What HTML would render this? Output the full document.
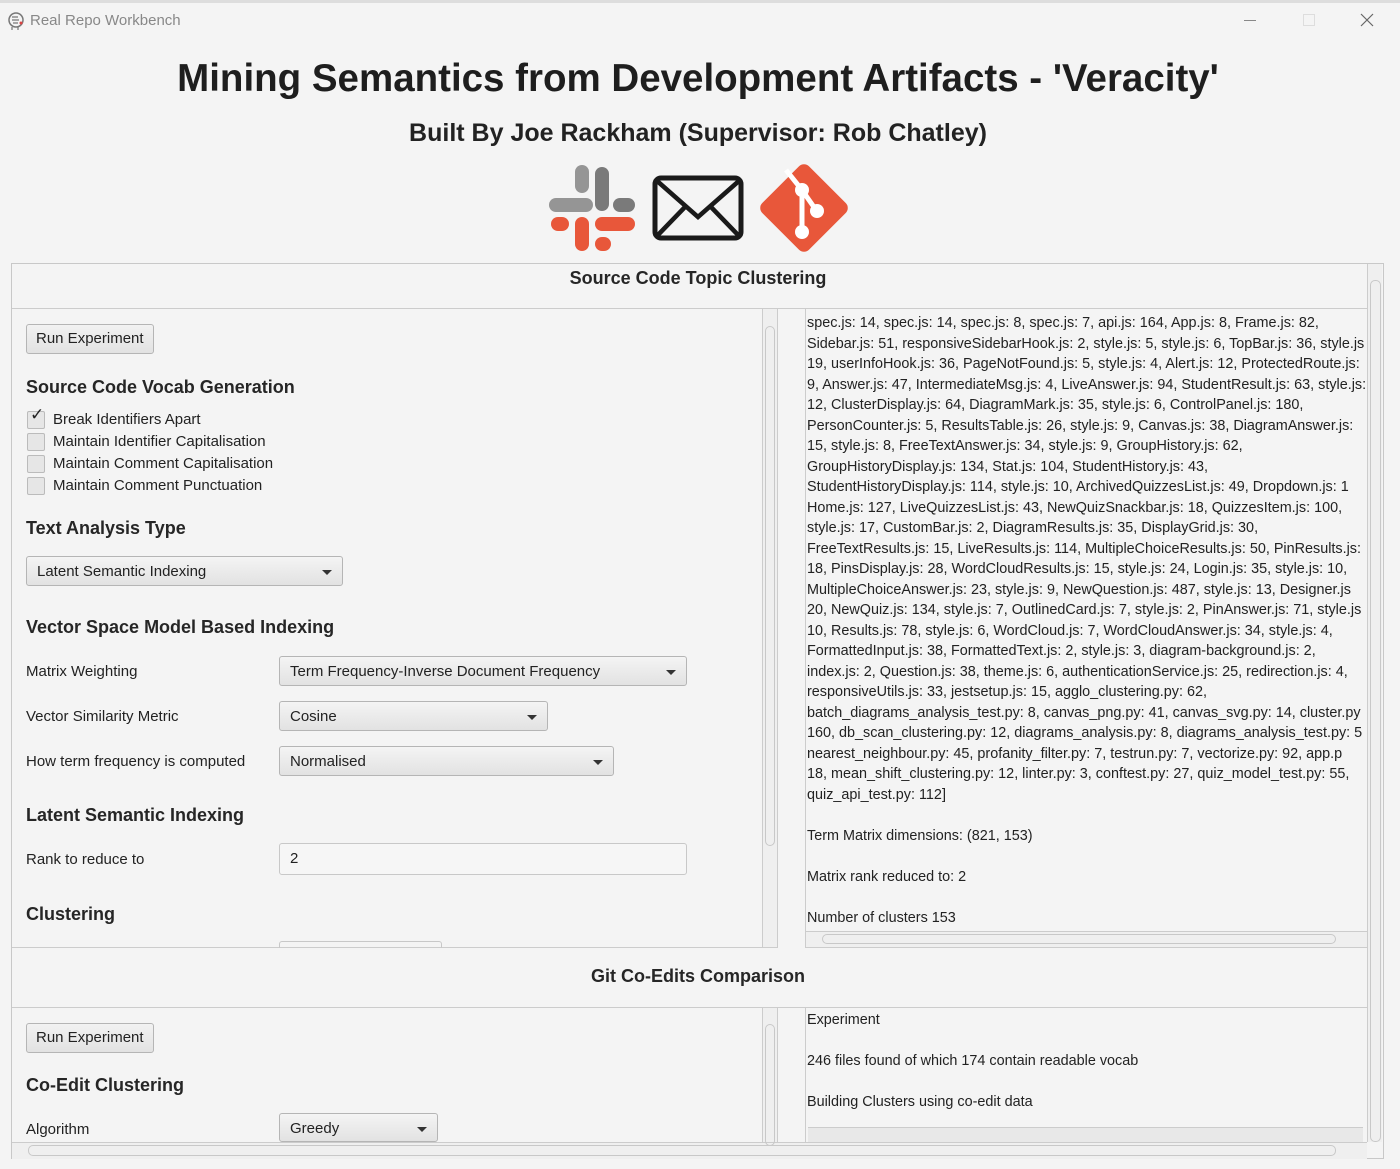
<!DOCTYPE html>
<html><head><meta charset="utf-8"><style>
body{margin:0;width:1400px;height:1169px;background:#f4f4f4;font-family:"Liberation Sans",sans-serif;color:#222;position:relative;overflow:hidden}
.a{position:absolute}
.t{font-size:15px;white-space:nowrap}
.h{font-weight:bold;font-size:18px;color:#262626}
.btn{position:absolute;border:1px solid #b5b5b5;border-radius:3px;background:linear-gradient(#f2f2f2,#e2e2e2);font-size:15px;padding:0 9px;line-height:28px;height:28px}
.cb{position:absolute;width:16px;height:16px;border:1px solid #bbb;border-radius:2px;background:#e6e6e6}
.dd{position:absolute;border:1px solid #b5b5b5;border-radius:3px;background:linear-gradient(#f4f4f4,#e2e2e2);height:30px;font-size:15px;line-height:30px;padding-left:10px;box-sizing:border-box}
.dd:after{content:"";position:absolute;right:10px;top:13px;border-left:5px solid transparent;border-right:5px solid transparent;border-top:5px solid #333}
.vs{position:absolute;width:14px;border-left:1px solid #ccc;background:#efefef}
.out{font-size:14.4px;line-height:20.5px;white-space:nowrap}
</style></head><body>
<div class="a" style="left:0;top:0;width:1400px;height:3px;background:#ddd"></div>
<svg class="a" style="left:6px;top:11px" width="20" height="20" viewBox="0 0 20 20"><circle cx="10" cy="9" r="7" fill="none" stroke="#777" stroke-width="1.5"/><path d="M6 16v3M12 16v3M6 6h6M6 9h7M7 12h5" stroke="#777" stroke-width="1.2"/><circle cx="15" cy="12" r="1.5" fill="#d44"/></svg>
<div class="a t" style="left:30px;top:12px;color:#888;font-size:15px">Real Repo Workbench</div>
<div class="a" style="left:1244px;top:20px;width:12px;height:1px;background:#888"></div>
<div class="a" style="left:1303px;top:14px;width:10px;height:10px;border:1px solid #ddd"></div>
<svg class="a" style="left:1360px;top:13px" width="14" height="14"><path d="M1 1L13 13M13 1L1 13" stroke="#666" stroke-width="1.2"/></svg>

<div class="a" style="left:0;top:57px;width:1396px;text-align:center;font-weight:bold;font-size:38.5px;color:#1e1e1e">Mining Semantics from Development Artifacts - 'Veracity'</div>
<div class="a" style="left:0;top:119px;width:1396px;text-align:center;font-weight:bold;font-size:25px;color:#222">Built By Joe Rackham (Supervisor: Rob Chatley)</div>

<svg class="a" style="left:548px;top:164px" width="88" height="88" viewBox="0 0 88 88">
<g stroke-linecap="round">
<line x1="34" y1="8" x2="34" y2="22" stroke="#959595" stroke-width="14"/>
<line x1="8" y1="41" x2="38" y2="41" stroke="#959595" stroke-width="14"/>
<line x1="54" y1="10" x2="54" y2="40" stroke="#7a7a7a" stroke-width="14"/>
<line x1="80" y1="41" x2="72" y2="41" stroke="#7a7a7a" stroke-width="14"/>
<line x1="54" y1="60" x2="80" y2="60" stroke="#e8573a" stroke-width="14"/>
<line x1="54" y1="80" x2="56" y2="80" stroke="#e8573a" stroke-width="14"/>
<line x1="34" y1="60" x2="34" y2="80" stroke="#e8573a" stroke-width="14"/>
<line x1="10" y1="60" x2="14" y2="60" stroke="#e8573a" stroke-width="14"/>
</g></svg>
<svg class="a" style="left:652px;top:175px" width="92" height="66" viewBox="0 0 92 66"><rect x="3" y="3" width="86" height="60" rx="6" fill="none" stroke="#1a1a1a" stroke-width="5"/><path d="M4 5L46 42L88 5M4 62L33 32M88 62L59 32" fill="none" stroke="#1a1a1a" stroke-width="4.5"/></svg>
<svg class="a" style="left:756px;top:160px" width="96" height="96" viewBox="0 0 96 96"><rect x="15" y="15" width="66" height="66" rx="7" transform="rotate(45 48 48)" fill="#e8573a"/><path d="M30 10L46 30L46 72M46 30L60 50" stroke="#fff" stroke-width="5" fill="none"/><circle cx="46" cy="30" r="7" fill="#fff"/><circle cx="61" cy="51" r="7" fill="#fff"/><circle cx="46" cy="72" r="7" fill="#fff"/></svg>

<div class="a" style="left:11px;top:263px;width:1373px;height:896px;border:1px solid #c8c8c8;box-sizing:border-box"></div>
<div class="vs" style="left:1367px;top:264px;height:878px"></div>
<div class="a" style="left:1370px;top:280px;width:9px;height:860px;border:1px solid #c8c8c8;border-radius:5px"></div>
<div class="a" style="left:12px;top:1142px;width:1355px;height:16px;background:#efefef;border-top:1px solid #ccc"></div>
<div class="a" style="left:28px;top:1145px;width:1306px;height:9px;border:1px solid #c8c8c8;border-radius:5px"></div>

<div class="a h" style="left:12px;top:268px;width:1372px;text-align:center">Source Code Topic Clustering</div>
<div class="a" style="left:12px;top:308px;width:1355px;height:1px;background:#ccc"></div>

<div class="a" style="left:12px;top:309px;width:766px;height:639px;border-right:1px solid #ccc;border-bottom:1px solid #ccc;box-sizing:border-box"></div>
<div class="vs" style="left:762px;top:309px;height:638px"></div>
<div class="a" style="left:765px;top:326px;width:8px;height:518px;border:1px solid #c8c8c8;border-radius:5px"></div>
<div class="btn" style="left:26px;top:324px">Run Experiment</div>
<div class="a h" style="left:26px;top:377px">Source Code Vocab Generation</div>
<div class="cb" style="left:27px;top:411px"></div><div class="a" style="left:30px;top:405px;font-size:17px">✓</div>
<div class="a t" style="left:53px;top:411px">Break Identifiers Apart</div>
<div class="cb" style="left:27px;top:433px"></div><div class="a t" style="left:53px;top:433px">Maintain Identifier Capitalisation</div>
<div class="cb" style="left:27px;top:455px"></div><div class="a t" style="left:53px;top:455px">Maintain Comment Capitalisation</div>
<div class="cb" style="left:27px;top:477px"></div><div class="a t" style="left:53px;top:477px">Maintain Comment Punctuation</div>
<div class="a h" style="left:26px;top:518px">Text Analysis Type</div>
<div class="dd" style="left:26px;top:556px;width:317px">Latent Semantic Indexing</div>
<div class="a h" style="left:26px;top:617px">Vector Space Model Based Indexing</div>
<div class="a t" style="left:26px;top:663px">Matrix Weighting</div>
<div class="dd" style="left:279px;top:656px;width:408px">Term Frequency-Inverse Document Frequency</div>
<div class="a t" style="left:26px;top:708px">Vector Similarity Metric</div>
<div class="dd" style="left:279px;top:701px;width:269px">Cosine</div>
<div class="a t" style="left:26px;top:753px">How term frequency is computed</div>
<div class="dd" style="left:279px;top:746px;width:335px">Normalised</div>
<div class="a h" style="left:26px;top:805px">Latent Semantic Indexing</div>
<div class="a t" style="left:26px;top:851px">Rank to reduce to</div>
<div class="a t" style="left:279px;top:843px;width:408px;height:32px;border:1px solid #c8c8c8;border-radius:3px;background:#f6f6f6;box-sizing:border-box;line-height:30px;padding-left:10px">2</div>
<div class="a h" style="left:26px;top:904px">Clustering</div>
<div class="a" style="left:279px;top:941px;width:161px;height:6px;border:1px solid #c8c8c8;border-bottom:none;border-radius:3px 3px 0 0"></div>

<div class="a" style="left:805px;top:309px;width:562px;height:639px;border-left:1px solid #ccc;border-bottom:1px solid #ccc;box-sizing:border-box;overflow:hidden">
<div class="out" style="position:absolute;left:1px;top:4px">
spec.js: 14, spec.js: 14, spec.js: 8, spec.js: 7, api.js: 164, App.js: 8, Frame.js: 82,<br>
Sidebar.js: 51, responsiveSidebarHook.js: 2, style.js: 5, style.js: 6, TopBar.js: 36, style.js<br>
19, userInfoHook.js: 36, PageNotFound.js: 5, style.js: 4, Alert.js: 12, ProtectedRoute.js:<br>
9, Answer.js: 47, IntermediateMsg.js: 4, LiveAnswer.js: 94, StudentResult.js: 63, style.js:<br>
12, ClusterDisplay.js: 64, DiagramMark.js: 35, style.js: 6, ControlPanel.js: 180,<br>
PersonCounter.js: 5, ResultsTable.js: 26, style.js: 9, Canvas.js: 38, DiagramAnswer.js:<br>
15, style.js: 8, FreeTextAnswer.js: 34, style.js: 9, GroupHistory.js: 62,<br>
GroupHistoryDisplay.js: 134, Stat.js: 104, StudentHistory.js: 43,<br>
StudentHistoryDisplay.js: 114, style.js: 10, ArchivedQuizzesList.js: 49, Dropdown.js: 1<br>
Home.js: 127, LiveQuizzesList.js: 43, NewQuizSnackbar.js: 18, QuizzesItem.js: 100,<br>
style.js: 17, CustomBar.js: 2, DiagramResults.js: 35, DisplayGrid.js: 30,<br>
FreeTextResults.js: 15, LiveResults.js: 114, MultipleChoiceResults.js: 50, PinResults.js:<br>
18, PinsDisplay.js: 28, WordCloudResults.js: 15, style.js: 24, Login.js: 35, style.js: 10,<br>
MultipleChoiceAnswer.js: 23, style.js: 9, NewQuestion.js: 487, style.js: 13, Designer.js<br>
20, NewQuiz.js: 134, style.js: 7, OutlinedCard.js: 7, style.js: 2, PinAnswer.js: 71, style.js<br>
10, Results.js: 78, style.js: 6, WordCloud.js: 7, WordCloudAnswer.js: 34, style.js: 4,<br>
FormattedInput.js: 38, FormattedText.js: 2, style.js: 3, diagram-background.js: 2,<br>
index.js: 2, Question.js: 38, theme.js: 6, authenticationService.js: 25, redirection.js: 4,<br>
responsiveUtils.js: 33, jestsetup.js: 15, agglo_clustering.py: 62,<br>
batch_diagrams_analysis_test.py: 8, canvas_png.py: 41, canvas_svg.py: 14, cluster.py<br>
160, db_scan_clustering.py: 12, diagrams_analysis.py: 8, diagrams_analysis_test.py: 5<br>
nearest_neighbour.py: 45, profanity_filter.py: 7, testrun.py: 7, vectorize.py: 92, app.p<br>
18, mean_shift_clustering.py: 12, linter.py: 3, conftest.py: 27, quiz_model_test.py: 55,<br>
quiz_api_test.py: 112]<br><br>
Term Matrix dimensions: (821, 153)<br><br>
Matrix rank reduced to: 2<br><br>
Number of clusters 153
</div>
<div class="a" style="left:0;top:622px;width:562px;height:16px;background:#efefef;border-top:1px solid #ccc"></div>
<div class="a" style="left:16px;top:625px;width:512px;height:8px;border:1px solid #c8c8c8;border-radius:5px"></div>
</div>

<div class="a h" style="left:12px;top:966px;width:1372px;text-align:center">Git Co-Edits Comparison</div>
<div class="a" style="left:12px;top:1007px;width:1355px;height:1px;background:#ccc"></div>

<div class="a" style="left:777px;top:1008px;width:1px;height:134px;background:#ccc"></div>
<div class="vs" style="left:762px;top:1008px;height:134px"></div>
<div class="a" style="left:765px;top:1024px;width:8px;height:120px;border:1px solid #c8c8c8;border-radius:5px"></div>
<div class="btn" style="left:26px;top:1023px">Run Experiment</div>
<div class="a h" style="left:26px;top:1075px">Co-Edit Clustering</div>
<div class="a t" style="left:26px;top:1121px">Algorithm</div>
<div class="dd" style="left:279px;top:1113px;width:159px;height:29px">Greedy</div>

<div class="a" style="left:805px;top:1008px;width:562px;height:134px;border-left:1px solid #ccc;box-sizing:border-box;overflow:hidden">
<div class="out" style="position:absolute;left:1px;top:2px">Experiment<br><br>246 files found of which 174 contain readable vocab<br><br>Building Clusters using co-edit data</div>
<div class="a" style="left:2px;top:119px;width:555px;height:20px;background:#e8e8e8;border-top:1px solid #ccc"></div>
</div>
</body></html>
